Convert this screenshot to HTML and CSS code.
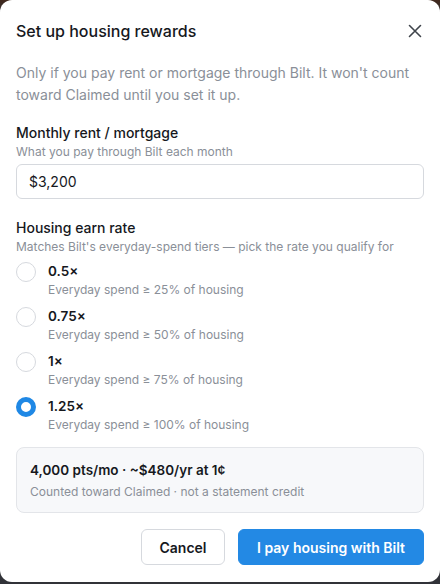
FILE: index.html
```html
<!DOCTYPE html>
<html lang="en">
<head>
<meta charset="utf-8">
<title>Set up housing rewards</title>
<link rel="stylesheet" href="styles.css">
</head>
<body>
<div class="backdrop">
  <div class="modal" role="dialog" aria-labelledby="title">
    <div class="header">
      <h2 id="title" class="title">Set up housing rewards</h2>
      <button class="close" aria-label="Close">
        <svg width="14" height="14" viewBox="0 0 14 14"><path d="M1.5 1.5 L12.5 12.5 M12.5 1.5 L1.5 12.5" stroke="#3f444b" stroke-width="1.6" stroke-linecap="round" fill="none"/></svg>
      </button>
    </div>
    <p class="desc">Only if you pay rent or mortgage through Bilt. It won't count toward Claimed until you set it up.</p>

    <div class="field">
      <div class="label">Monthly rent / mortgage</div>
      <div class="hint">What you pay through Bilt each month</div>
      <input class="input" type="text" value="$3,200">
    </div>

    <div class="field rates">
      <div class="label">Housing earn rate</div>
      <div class="hint">Matches Bilt's everyday-spend tiers — pick the rate you qualify for</div>
      <div class="options">
        <label class="option">
          <span class="radio"></span>
          <span class="opt-text"><span class="opt-title">0.5×</span><span class="opt-sub">Everyday spend ≥ 25% of housing</span></span>
        </label>
        <label class="option">
          <span class="radio"></span>
          <span class="opt-text"><span class="opt-title">0.75×</span><span class="opt-sub">Everyday spend ≥ 50% of housing</span></span>
        </label>
        <label class="option">
          <span class="radio"></span>
          <span class="opt-text"><span class="opt-title">1×</span><span class="opt-sub">Everyday spend ≥ 75% of housing</span></span>
        </label>
        <label class="option">
          <span class="radio checked"></span>
          <span class="opt-text"><span class="opt-title">1.25×</span><span class="opt-sub">Everyday spend ≥ 100% of housing</span></span>
        </label>
      </div>
    </div>

    <div class="summary">
      <div class="sum-title">4,000 pts/mo · ~$480/yr at 1¢</div>
      <div class="sum-sub">Counted toward Claimed · not a statement credit</div>
    </div>

    <div class="actions">
      <button class="btn btn-secondary">Cancel</button>
      <button class="btn btn-primary">I pay housing with Bilt</button>
    </div>
  </div>
</div>
</body>
</html>
```
FILE: styles.css
```css
* { box-sizing: border-box; }
html, body { margin: 0; padding: 0; }
body {
  width: 440px;
  height: 584px;
  overflow: hidden;
  font-family: Inter, "Noto Sans", sans-serif;
  background: linear-gradient(to bottom, #6a3412 0, #5a4a42 10px, #4b4d52 100%);
}
.backdrop {
  height: 584px;
  background: rgba(30, 30, 34, 0.55);
}
.modal {
  width: 440px;
  height: 582px;
  background: #fff;
  border-radius: 12px;
  padding: 0 16px;
}
.header {
  height: 62px;
  display: flex;
  align-items: center;
  justify-content: space-between;
}
.title {
  margin: 0;
  font-size: 16px;
  font-weight: 500;
  color: #16181d;
}
.close {
  border: 0;
  background: none;
  padding: 0;
  width: 14px;
  height: 14px;
  margin-right: 2px;
  display: flex;
}
.desc {
  margin: 0;
  font-size: 14px;
  line-height: 22px;
  color: #8a8f98;
}
.field { margin-top: 17px; }
.label {
  font-size: 14px;
  line-height: 20px;
  font-weight: 500;
  color: #16181d;
}
.hint {
  font-size: 12px;
  line-height: 16px;
  color: #8a8f98;
  margin-top: 1px;
}
.input {
  display: block;
  width: 100%;
  height: 35px;
  margin-top: 4px;
  border: 1px solid #d6d9de;
  border-radius: 6px;
  padding: 0 12px;
  font-family: inherit;
  font-size: 14px;
  color: #16181d;
  outline: none;
}
.rates { margin-top: 19px; }
.options {
  display: flex;
  flex-direction: column;
  gap: 8px;
  margin-top: 7px;
}
.option {
  display: flex;
  gap: 12px;
  align-items: flex-start;
}
.radio {
  width: 20px;
  height: 20px;
  border-radius: 50%;
  border: 1px solid #d6d9de;
  flex: none;
}
.radio.checked {
  border: 5.5px solid #1f88e5;
  background: #fff;
}
.opt-text { display: flex; flex-direction: column; }
.opt-title {
  font-size: 13.5px;
  line-height: 18px;
  font-weight: 600;
  color: #16181d;
}
.opt-sub {
  font-size: 12px;
  line-height: 18px;
  color: #8a8f98;
  margin-top: 1px;
}
.summary {
  margin-top: 13px;
  background: #f7f8fa;
  border: 1px solid #e3e5e9;
  border-radius: 8px;
  padding: 12px 13px 0;
  height: 66px;
}
.sum-title {
  font-size: 13.5px;
  line-height: 20px;
  font-weight: 600;
  color: #16181d;
}
.sum-sub {
  font-size: 12px;
  line-height: 18px;
  color: #8a8f98;
  margin-top: 3px;
}
.actions {
  display: flex;
  justify-content: flex-end;
  gap: 13px;
  margin-top: 16px;
}
.btn {
  height: 36px;
  border-radius: 6px;
  font-family: inherit;
  font-size: 14px;
  font-weight: 600;
  padding: 0;
  white-space: nowrap;
  cursor: pointer;
}
.btn-secondary {
  background: #fff;
  border: 1px solid #d6d9de;
  color: #16181d;
  width: 84px;
}
.btn-primary {
  background: #2389e4;
  border: 1px solid #2389e4;
  color: #fff;
  width: 186px;
}
```
